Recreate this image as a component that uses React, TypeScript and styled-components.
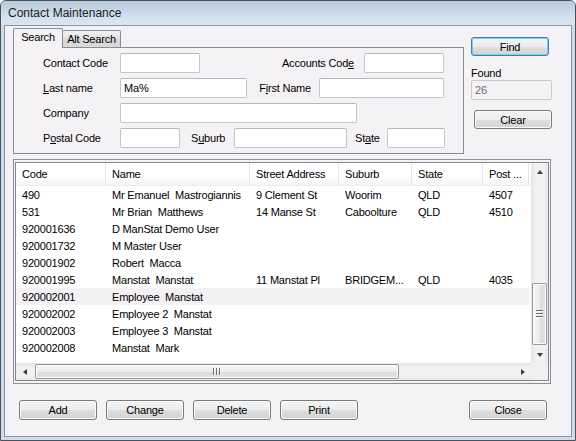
import styled, { createGlobalStyle } from 'styled-components';

const GlobalStyle = createGlobalStyle`
  html, body {
    margin: 0;
    padding: 0;
    background: #ffffff;
  }
  body {
    font-family: 'Liberation Sans', Arial, sans-serif;
    font-size: 11px;
    color: #000;
  }
`;

interface Contact {
  code: string;
  name: string;
  street?: string;
  suburb?: string;
  state?: string;
  post?: string;
}

const columns = [
  { title: 'Code', width: 90 },
  { title: 'Name', width: 144 },
  { title: 'Street Address', width: 89 },
  { title: 'Suburb', width: 73 },
  { title: 'State', width: 71 },
  { title: 'Post ...', width: 46 },
];

const contacts: Contact[] = [
  { code: '490', name: 'Mr Emanuel  Mastrogiannis', street: '9 Clement St', suburb: 'Woorim', state: 'QLD', post: '4507' },
  { code: '531', name: 'Mr Brian  Matthews', street: '14 Manse St', suburb: 'Caboolture', state: 'QLD', post: '4510' },
  { code: '920001636', name: 'D ManStat Demo User' },
  { code: '920001732', name: 'M Master User' },
  { code: '920001902', name: 'Robert  Macca' },
  { code: '920001995', name: 'Manstat  Manstat', street: '11 Manstat Pl', suburb: 'BRIDGEM...', state: 'QLD', post: '4035' },
  { code: '920002001', name: 'Employee  Manstat' },
  { code: '920002002', name: 'Employee 2  Manstat' },
  { code: '920002003', name: 'Employee 3  Manstat' },
  { code: '920002008', name: 'Manstat  Mark' },
];

const hotRow = 6;

export default function App() {
  return (
    <>
      <GlobalStyle />
      <Window>
        <TitleBar>Contact Maintenance</TitleBar>
        <Frame>
          <Body>
            <TopArea>
              <TabGroup>
                <TabStrip>
                  <Tab $active>Search</Tab>
                  <Tab>Alt Search</Tab>
                </TabStrip>
                <TabPane>
                  <FormRow>
                    <Label>Contact Code</Label>
                    <TextBox $w={80} />
                    <SideLabel $w={164} $gap={10}>
                      Accounts Cod<Key>e</Key>
                    </SideLabel>
                    <TextBox $w={80} />
                  </FormRow>
                  <FormRow>
                    <Label>
                      <Key>L</Key>ast name
                    </Label>
                    <TextBox $w={127} value="Ma%" readOnly />
                    <SideLabel $w={72} $gap={8}>
                      F<Key>i</Key>rst Name
                    </SideLabel>
                    <TextBox $w={125} />
                  </FormRow>
                  <FormRow>
                    <Label>Company</Label>
                    <TextBox $w={237} />
                  </FormRow>
                  <FormRow>
                    <Label>
                      P<Key>o</Key>stal Code
                    </Label>
                    <TextBox $w={60} />
                    <InlineLabel $w={43} $lead={11}>
                      S<Key>u</Key>burb
                    </InlineLabel>
                    <TextBox $w={113} />
                    <InlineLabel $w={32} $lead={8}>
                      St<Key>a</Key>te
                    </InlineLabel>
                    <TextBox $w={58} />
                  </FormRow>
                </TabPane>
              </TabGroup>
              <SideColumn>
                <Button $default $w={78} $h={19}>
                  Find
                </Button>
                <FoundLabel>Found</FoundLabel>
                <CountBox>26</CountBox>
                <ClearButton $w={78} $h={19}>
                  Clear
                </ClearButton>
              </SideColumn>
            </TopArea>

            <ListFrame>
              <ListView>
                <ListContent>
                  <HeaderRow>
                    {columns.map((c) => (
                      <HeaderCell key={c.title} $w={c.width}>
                        {c.title}
                      </HeaderCell>
                    ))}
                  </HeaderRow>
                  {contacts.map((c, i) => (
                    <DataRow key={c.code} $hot={i === hotRow}>
                      <Cell $w={90}>{c.code}</Cell>
                      <Cell $w={144}>{c.name}</Cell>
                      <Cell $w={89}>{c.street}</Cell>
                      <Cell $w={73}>{c.suburb}</Cell>
                      <Cell $w={71}>{c.state}</Cell>
                      <Cell $w={46}>{c.post}</Cell>
                    </DataRow>
                  ))}
                </ListContent>
                <VScroll>
                  <ScrollButton>
                    <Arrow $dir="up" />
                  </ScrollButton>
                  <VTrack>
                    <VThumb $offset={103} $size={62}>
                      <GripH />
                      <GripH />
                      <GripH />
                    </VThumb>
                  </VTrack>
                  <ScrollButton>
                    <Arrow $dir="down" />
                  </ScrollButton>
                </VScroll>
                <HScroll>
                  <ScrollButton>
                    <Arrow $dir="left" />
                  </ScrollButton>
                  <HTrack>
                    <HThumb $offset={2} $size={364}>
                      <GripV />
                      <GripV />
                      <GripV />
                    </HThumb>
                  </HTrack>
                  <ScrollButton>
                    <Arrow $dir="right" />
                  </ScrollButton>
                </HScroll>
                <Corner />
              </ListView>
            </ListFrame>

            <ButtonBar>
              <Button $w={78} $h={20}>Add</Button>
              <Button $w={78} $h={20}>Change</Button>
              <Button $w={78} $h={20}>Delete</Button>
              <Button $w={78} $h={20}>Print</Button>
              <CloseButton $w={78} $h={20}>Close</CloseButton>
            </ButtonBar>
          </Body>
        </Frame>
      </Window>
    </>
  );
}

const Window = styled.div`
  width: 576px;
  height: 441px;
  box-sizing: border-box;
  border: 1px solid #4b5158;
  border-radius: 6px 6px 0 0;
  background: #ccdaea;
  display: flex;
  flex-direction: column;
  overflow: hidden;
`;

const TitleBar = styled.div`
  height: 24px;
  flex: none;
  display: flex;
  align-items: center;
  padding-left: 7px;
  background: linear-gradient(#b8cadd, #d3e0ee 70%, #dbe6f2);
  font-size: 12px;
  color: #1b1b1b;
`;

const Frame = styled.div`
  flex: 1;
  display: flex;
  padding: 0 3px 3px 3px;
  background: #cddbea;
`;

const Body = styled.div`
  flex: 1;
  border: 1px solid #8a95a3;
  background: #f5f2f6;
  padding: 2px 0 0 8px;
  display: flex;
  flex-direction: column;
`;

const TopArea = styled.div`
  display: flex;
  height: 126px;
  flex: none;
`;

const TabGroup = styled.div`
  width: 451px;
  display: flex;
  flex-direction: column;
`;

const TabStrip = styled.div`
  height: 19px;
  display: flex;
  align-items: flex-end;
`;

const Tab = styled.div<{ $active?: boolean }>`
  box-sizing: border-box;
  height: ${(p) => (p.$active ? '20px' : '17px')};
  width: ${(p) => (p.$active ? '50px' : '58px')};
  margin-bottom: ${(p) => (p.$active ? '-1px' : '0')};
  position: relative;
  z-index: ${(p) => (p.$active ? 1 : 0)};
  border: 1px solid #898c95;
  border-bottom: none;
  border-left-width: ${(p) => (p.$active ? '1px' : '0')};
  border-radius: 2px 2px 0 0;
  background: ${(p) => (p.$active ? '#f5f2f6' : 'linear-gradient(#f2f2f2, #e3e3e3 50%, #d7d7d7 51%, #d9d9d9)')};
  display: flex;
  align-items: ${(p) => (p.$active ? 'flex-start' : 'center')};
  justify-content: center;
  padding-top: ${(p) => (p.$active ? '2px' : '0')};
  letter-spacing: -0.2px;
`;

const TabPane = styled.div`
  box-sizing: border-box;
  height: 107px;
  border: 1px solid #898c95;
  padding: 5px 0 0 29px;
  display: flex;
  flex-direction: column;
  gap: 5px;
`;

const FormRow = styled.div`
  display: flex;
  align-items: center;
  height: 20px;
`;

const Label = styled.span`
  width: 77px;
  flex: none;
  letter-spacing: -0.2px;
  white-space: nowrap;
`;

const SideLabel = styled.span<{ $w: number; $gap: number }>`
  width: ${(p) => p.$w - p.$gap}px;
  margin-right: ${(p) => p.$gap}px;
  flex: none;
  text-align: right;
  letter-spacing: -0.2px;
  white-space: nowrap;
`;

const InlineLabel = styled.span<{ $w: number; $lead: number }>`
  width: ${(p) => p.$w}px;
  margin-left: ${(p) => p.$lead}px;
  flex: none;
  letter-spacing: -0.2px;
  white-space: nowrap;
`;

const Key = styled.span`
  text-decoration: underline;
`;

const TextBox = styled.input<{ $w: number }>`
  box-sizing: border-box;
  width: ${(p) => p.$w}px;
  height: 20px;
  flex: none;
  margin: 0;
  padding: 0 3px;
  border: 1px solid #c3c5cb;
  border-top-color: #b4b7be;
  border-radius: 2px;
  background: #ffffff;
  font: 11px 'Liberation Sans', Arial, sans-serif;
  letter-spacing: -0.2px;
  color: #000;
  outline: none;
`;

const SideColumn = styled.div`
  margin-left: 7px;
  width: 81px;
  padding-top: 9px;
  display: flex;
  flex-direction: column;
  align-items: flex-start;
`;

const Button = styled.button<{ $w: number; $h: number; $default?: boolean }>`
  box-sizing: border-box;
  width: ${(p) => p.$w}px;
  height: ${(p) => p.$h}px;
  margin: 0;
  padding: 0;
  border: 1px solid ${(p) => (p.$default ? '#3c7fb1' : '#7a7a7a')};
  border-radius: 3px;
  box-shadow: inset 0 0 0 1px ${(p) => (p.$default ? '#74d0f4' : '#fbfbfb')};
  background: linear-gradient(#f4f4f4, #ececec 50%, #dedede 51%, #d3d3d3);
  font: 11px 'Liberation Sans', Arial, sans-serif;
  letter-spacing: -0.2px;
  color: #000;
  display: flex;
  align-items: center;
  justify-content: center;
`;

const ClearButton = styled(Button)`
  margin: 10px 0 0 3px;
`;

const CloseButton = styled(Button)`
  margin-left: auto;
`;

const FoundLabel = styled.div`
  margin-top: 10px;
  height: 14px;
  line-height: 14px;
  letter-spacing: -0.2px;
`;

const CountBox = styled.div`
  box-sizing: border-box;
  width: 81px;
  height: 20px;
  border: 1px solid #c9c9cc;
  border-radius: 2px;
  padding-left: 3px;
  display: flex;
  align-items: center;
  color: #6d6d6d;
`;

const ListFrame = styled.div`
  box-sizing: border-box;
  margin-top: 5px;
  width: 538px;
  height: 225px;
  flex: none;
  border: 1px solid #8e9097;
  padding: 2px 1px;
`;

const ListView = styled.div`
  box-sizing: border-box;
  height: 100%;
  border: 1px solid #828790;
  background: #ffffff;
  display: grid;
  grid-template-columns: 1fr 17px;
  grid-template-rows: 1fr 17px;
`;

const ListContent = styled.div`
  overflow: hidden;
  display: flex;
  flex-direction: column;
`;

const HeaderRow = styled.div`
  display: flex;
  height: 23px;
  flex: none;
  background: linear-gradient(#ffffff, #ffffff 60%, #f4f5f7);
  border-bottom: 1px solid #eceef1;
  box-sizing: border-box;
`;

const HeaderCell = styled.div<{ $w: number }>`
  box-sizing: border-box;
  width: ${(p) => p.$w}px;
  flex: none;
  padding-left: 6px;
  border-right: 1px solid #e3e5e9;
  display: flex;
  align-items: center;
  letter-spacing: -0.2px;
  white-space: nowrap;
  overflow: hidden;
`;

const DataRow = styled.div<{ $hot?: boolean }>`
  display: flex;
  height: 17px;
  flex: none;
  background: ${(p) => (p.$hot ? '#f4f1f5' : 'transparent')};
  width: 513px;
`;

const Cell = styled.div<{ $w: number }>`
  box-sizing: border-box;
  width: ${(p) => p.$w}px;
  flex: none;
  padding-left: 6px;
  display: flex;
  align-items: center;
  white-space: pre;
  overflow: hidden;
  letter-spacing: -0.2px;
`;

const VScroll = styled.div`
  display: flex;
  flex-direction: column;
  background: linear-gradient(to right, #e4e4e4, #f1f1f1 25%, #f1f1f1 75%, #e8e8e8);
`;

const HScroll = styled.div`
  display: flex;
  background: linear-gradient(#e4e4e4, #f1f1f1 25%, #f1f1f1 75%, #e8e8e8);
`;

const Corner = styled.div`
  background: #f0f0f0;
`;

const ScrollButton = styled.div`
  width: 17px;
  height: 17px;
  flex: none;
  display: flex;
  align-items: center;
  justify-content: center;
`;

const Arrow = styled.span<{ $dir: 'up' | 'down' | 'left' | 'right' }>`
  width: 0;
  height: 0;
  border-style: solid;
  border-color: transparent;
  ${(p) =>
    p.$dir === 'up'
      ? 'border-width: 0 3.5px 4px 3.5px; border-bottom-color: #3e3e3e;'
      : p.$dir === 'down'
      ? 'border-width: 4px 3.5px 0 3.5px; border-top-color: #3e3e3e;'
      : p.$dir === 'left'
      ? 'border-width: 3.5px 4px 3.5px 0; border-right-color: #3e3e3e;'
      : 'border-width: 3.5px 0 3.5px 4px; border-left-color: #3e3e3e;'}
`;

const VTrack = styled.div`
  flex: 1;
  display: flex;
  flex-direction: column;
  align-items: center;
`;

const HTrack = styled.div`
  flex: 1;
  display: flex;
  align-items: center;
`;

const VThumb = styled.div<{ $offset: number; $size: number }>`
  box-sizing: border-box;
  margin-top: ${(p) => p.$offset}px;
  height: ${(p) => p.$size}px;
  width: 15px;
  border: 1px solid #979797;
  border-radius: 2px;
  background: linear-gradient(to right, #f6f6f6, #ececec 50%, #dcdcdc 51%, #e3e3e3);
  box-shadow: inset 0 0 0 1px #fbfbfb;
  display: flex;
  flex-direction: column;
  align-items: center;
  justify-content: center;
  gap: 1px;
`;

const HThumb = styled.div<{ $offset: number; $size: number }>`
  box-sizing: border-box;
  margin-left: ${(p) => p.$offset}px;
  width: ${(p) => p.$size}px;
  height: 15px;
  border: 1px solid #979797;
  border-radius: 2px;
  background: linear-gradient(#f6f6f6, #ececec 50%, #dcdcdc 51%, #e3e3e3);
  box-shadow: inset 0 0 0 1px #fbfbfb;
  display: flex;
  align-items: center;
  justify-content: center;
  gap: 1px;
`;

const GripH = styled.span`
  width: 7px;
  height: 1px;
  background: #6b6b6b;
  border-bottom: 1px solid #fafafa;
`;

const GripV = styled.span`
  width: 1px;
  height: 7px;
  background: #6b6b6b;
  border-right: 1px solid #fafafa;
`;

const ButtonBar = styled.div`
  margin: 16px 0 0 6px;
  width: 528px;
  display: flex;
  gap: 9px;
`;
